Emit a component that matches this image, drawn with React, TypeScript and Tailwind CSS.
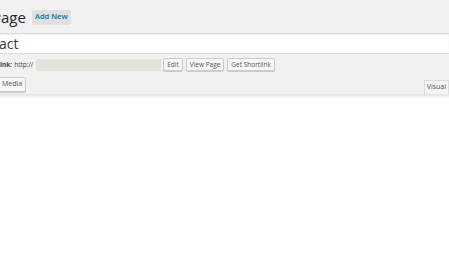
import React from 'react';

const Btn: React.FC<{ children: React.ReactNode; className?: string }> = ({ children, className = '' }) => (
  <span
    className={`inline-flex items-center border border-[#cccccc] bg-[#f7f7f7] text-[#555] rounded-[2px] shadow-[0_1px_0_#ccc] ${className}`}
  >
    {children}
  </span>
);

export default function App() {
  return (
    <div className="w-[449px] h-[253px] overflow-hidden bg-white" style={{ fontFamily: '"Open Sans", "Liberation Sans", sans-serif' }}>
      <div className="bg-[#f1f1f1] pb-[2px]">
        {/* heading */}
        <div className="flex items-center h-[33px] pt-[1px]">
          <h1 className="text-[15px] leading-none text-[#23282d] ml-[-8px]">Page</h1>
          <span className="ml-[6px] h-[15px] px-[3px] flex items-center bg-[#e0e0e0] text-[#0073aa] text-[7.5px] font-semibold rounded-[2px]">
            Add New
          </span>
        </div>

        {/* title */}
        <div className="h-[21px] bg-white border-y border-[#dddddd] flex items-center shadow-[inset_0_1px_2px_rgba(0,0,0,0.07)]">
          <span className="text-[14px] leading-none text-[#32373c] ml-[-1px] mt-[1px]">act</span>
        </div>

        {/* permalink */}
        <div className="flex items-center h-[17px] mt-[2px] text-[6.5px] text-[#666]">
          <span className="font-bold text-[#444]">ink:</span>
          <span className="ml-[2px] text-[#444]">http://</span>
          <span className="ml-[3px] w-[125px] h-[12px] bg-[#e3e3dc]" />
          <Btn className="ml-[2px] h-[13px] px-[3px]">Edit</Btn>
          <Btn className="ml-[3px] h-[13px] px-[3px]">View Page</Btn>
          <Btn className="ml-[3px] h-[13px] px-[3px]">Get Shortlink</Btn>
        </div>

        {/* media / tabs */}
        <div className="flex items-end justify-between mt-[2px] h-[19px]">
          <Btn className="ml-[-2px] h-[15px] px-[3px] text-[7px] mb-[2px]">Media</Btn>
          <span className="h-[14px] px-[2px] flex items-center bg-[#f5f5f5] border border-[#dcdcde] border-b-0 text-[7px] text-[#555]">
            Visual
          </span>
        </div>
        <div className="h-[2px] bg-[#e9e9e9] border-t border-[#e5e5e5]" />
      </div>
    </div>
  );
}
